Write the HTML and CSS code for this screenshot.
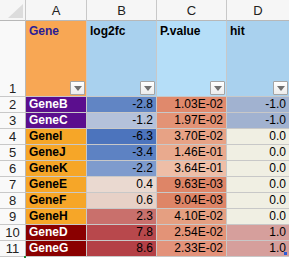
FILE: index.html
```html
<!DOCTYPE html>
<html lang="en">
<head>
    <meta charset="UTF-8">
    <meta name="viewport" content="width=device-width, initial-scale=1.0">
    <title>Gene hits</title>
    <link rel="stylesheet" href="styles.css">
</head>
<body>
    <div class="sheet">
        <!-- column letters -->
        <div class="corner">
            <svg width="25" height="20" viewBox="0 0 25 20"><polygon points="8,18 23,18 23,4" fill="#dcdcdc"/></svg>
        </div>
        <div class="colhead">A</div>
        <div class="colhead">B</div>
        <div class="colhead">C</div>
        <div class="colhead">D</div>

        <!-- header row with filters -->
        <div class="rownum first">1</div>
        <div class="title gene-col"><span>Gene</span><span class="filter"></span></div>
        <div class="title fc-col"><span>log2fc</span><span class="filter"></span></div>
        <div class="title p-col"><span>P.value</span><span class="filter"></span></div>
        <div class="title hit-col"><span>hit</span><span class="filter"></span></div>

        <div class="rownum">2</div>
        <div class="gene down">GeneB</div>
        <div class="num" style="background:#6185c4">-2.8</div>
        <div class="num" style="background:#e0896c">1.03E-02</div>
        <div class="num hit-down">-1.0</div>

        <div class="rownum">3</div>
        <div class="gene down">GeneC</div>
        <div class="num" style="background:#b4c1da">-1.2</div>
        <div class="num" style="background:#e39376">1.97E-02</div>
        <div class="num hit-down">-1.0</div>

        <div class="rownum">4</div>
        <div class="gene flat">GeneI</div>
        <div class="num" style="background:#4c74bd">-6.3</div>
        <div class="num" style="background:#e7a285">3.70E-02</div>
        <div class="num hit-flat">0.0</div>

        <div class="rownum">5</div>
        <div class="gene flat">GeneJ</div>
        <div class="num" style="background:#5d82c3">-3.4</div>
        <div class="num" style="background:#e9aa8e">1.46E-01</div>
        <div class="num hit-flat">0.0</div>

        <div class="rownum">6</div>
        <div class="gene flat">GeneK</div>
        <div class="num" style="background:#7e9bcd">-2.2</div>
        <div class="num" style="background:#eebea7">3.64E-01</div>
        <div class="num hit-flat">0.0</div>

        <div class="rownum">7</div>
        <div class="gene flat">GeneE</div>
        <div class="num" style="background:#ead9d0">0.4</div>
        <div class="num" style="background:#de8567">9.63E-03</div>
        <div class="num hit-flat">0.0</div>

        <div class="rownum">8</div>
        <div class="gene flat">GeneF</div>
        <div class="num" style="background:#e7d1c7">0.6</div>
        <div class="num" style="background:#de8567">9.04E-03</div>
        <div class="num hit-flat">0.0</div>

        <div class="rownum">9</div>
        <div class="gene flat">GeneH</div>
        <div class="num" style="background:#c9706c">2.3</div>
        <div class="num" style="background:#e59f81">4.10E-02</div>
        <div class="num hit-flat">0.0</div>

        <div class="rownum">10</div>
        <div class="gene up">GeneD</div>
        <div class="num" style="background:#b8484c">7.8</div>
        <div class="num" style="background:#e39377">2.54E-02</div>
        <div class="num hit-up">1.0</div>

        <div class="rownum">11</div>
        <div class="gene up">GeneG</div>
        <div class="num" style="background:#b44046">8.6</div>
        <div class="num" style="background:#e3927a">2.33E-02</div>
        <div class="num hit-up last">1.0<span class="handle"></span></div>
    </div>
    <div class="sel-mark"></div>
</body>
</html>
```

FILE: styles.css
```css
body{
    margin: 0;
    overflow: hidden;
    background: #fff;
    font-family: "Liberation Sans", Arial, sans-serif;
    font-size: 12px;
    color: #000;
}
.sheet{
    display: grid;
    grid-template-columns: 26px 61px 70px 70px 63px;
    grid-template-rows: 21px 76px repeat(10, 16px);
    width: 290px;
}
.sheet > div{
    box-sizing: border-box;
    border-right: 1px solid #c8c8c8;
    border-bottom: 1px solid #c8c8c8;
    line-height: 15px;
    white-space: nowrap;
    overflow: hidden;
}
.corner{
    background: #f6f6f6;
    border-bottom-color: #b8b8b8 !important;
}
.corner svg{
    display: block;
}
.colhead{
    background: #f6f6f6;
    border-bottom-color: #b8b8b8 !important;
    text-align: center;
    font-size: 13px;
    line-height: 21px !important;
    color: #222;
}
.rownum{
    background: #f9f9f9;
    text-align: center;
    font-size: 13px;
    color: #222;
    border-right-color: #b8b8b8 !important;
}
.rownum.first{
    display: flex;
    align-items: flex-end;
    justify-content: center;
}
.title{
    display: flex;
    flex-direction: column;
    justify-content: space-between;
    padding: 3px 1px 1px 3px;
    font-weight: bold;
}
.gene-col{
    background: #f8a754;
    color: #2b1d96;
}
.fc-col{
    background: #a9d1ee;
}
.p-col{
    background: #b5def8;
}
.hit-col{
    background: #a9d1ee;
}
.filter{
    align-self: flex-end;
    box-sizing: border-box;
    width: 15px;
    height: 14px;
    border: 1px solid #a4a4a4;
    border-radius: 1px;
    background: linear-gradient(#ffffff, #ececec);
    display: flex;
    align-items: center;
    justify-content: center;
}
.filter::after{
    content: "";
    border-left: 4px solid transparent;
    border-right: 4px solid transparent;
    border-top: 5px solid #707070;
    margin-top: 1px;
}
.gene{
    padding-left: 3px;
    font-weight: bold;
}
.gene.down{
    background: #5b0e8e;
    color: #fff;
}
.gene.flat{
    background: #f6a628;
}
.gene.up{
    background: #8a0000;
    color: #fff;
}
.num{
    text-align: right;
    padding-right: 3px;
}
.hit-down{
    background: #a1b2d0;
}
.hit-flat{
    background: #f0efe3;
}
.hit-up{
    background: #d69f9c;
}
.last{
    position: relative;
}
.handle{
    position: absolute;
    right: 2px;
    bottom: 1px;
    width: 3px;
    height: 3px;
    background: #2a5bd7;
}
.sel-mark{
    position: absolute;
    left: 24px;
    top: 256px;
    width: 2px;
    height: 2px;
    background: #1e8b3a;
}
```
